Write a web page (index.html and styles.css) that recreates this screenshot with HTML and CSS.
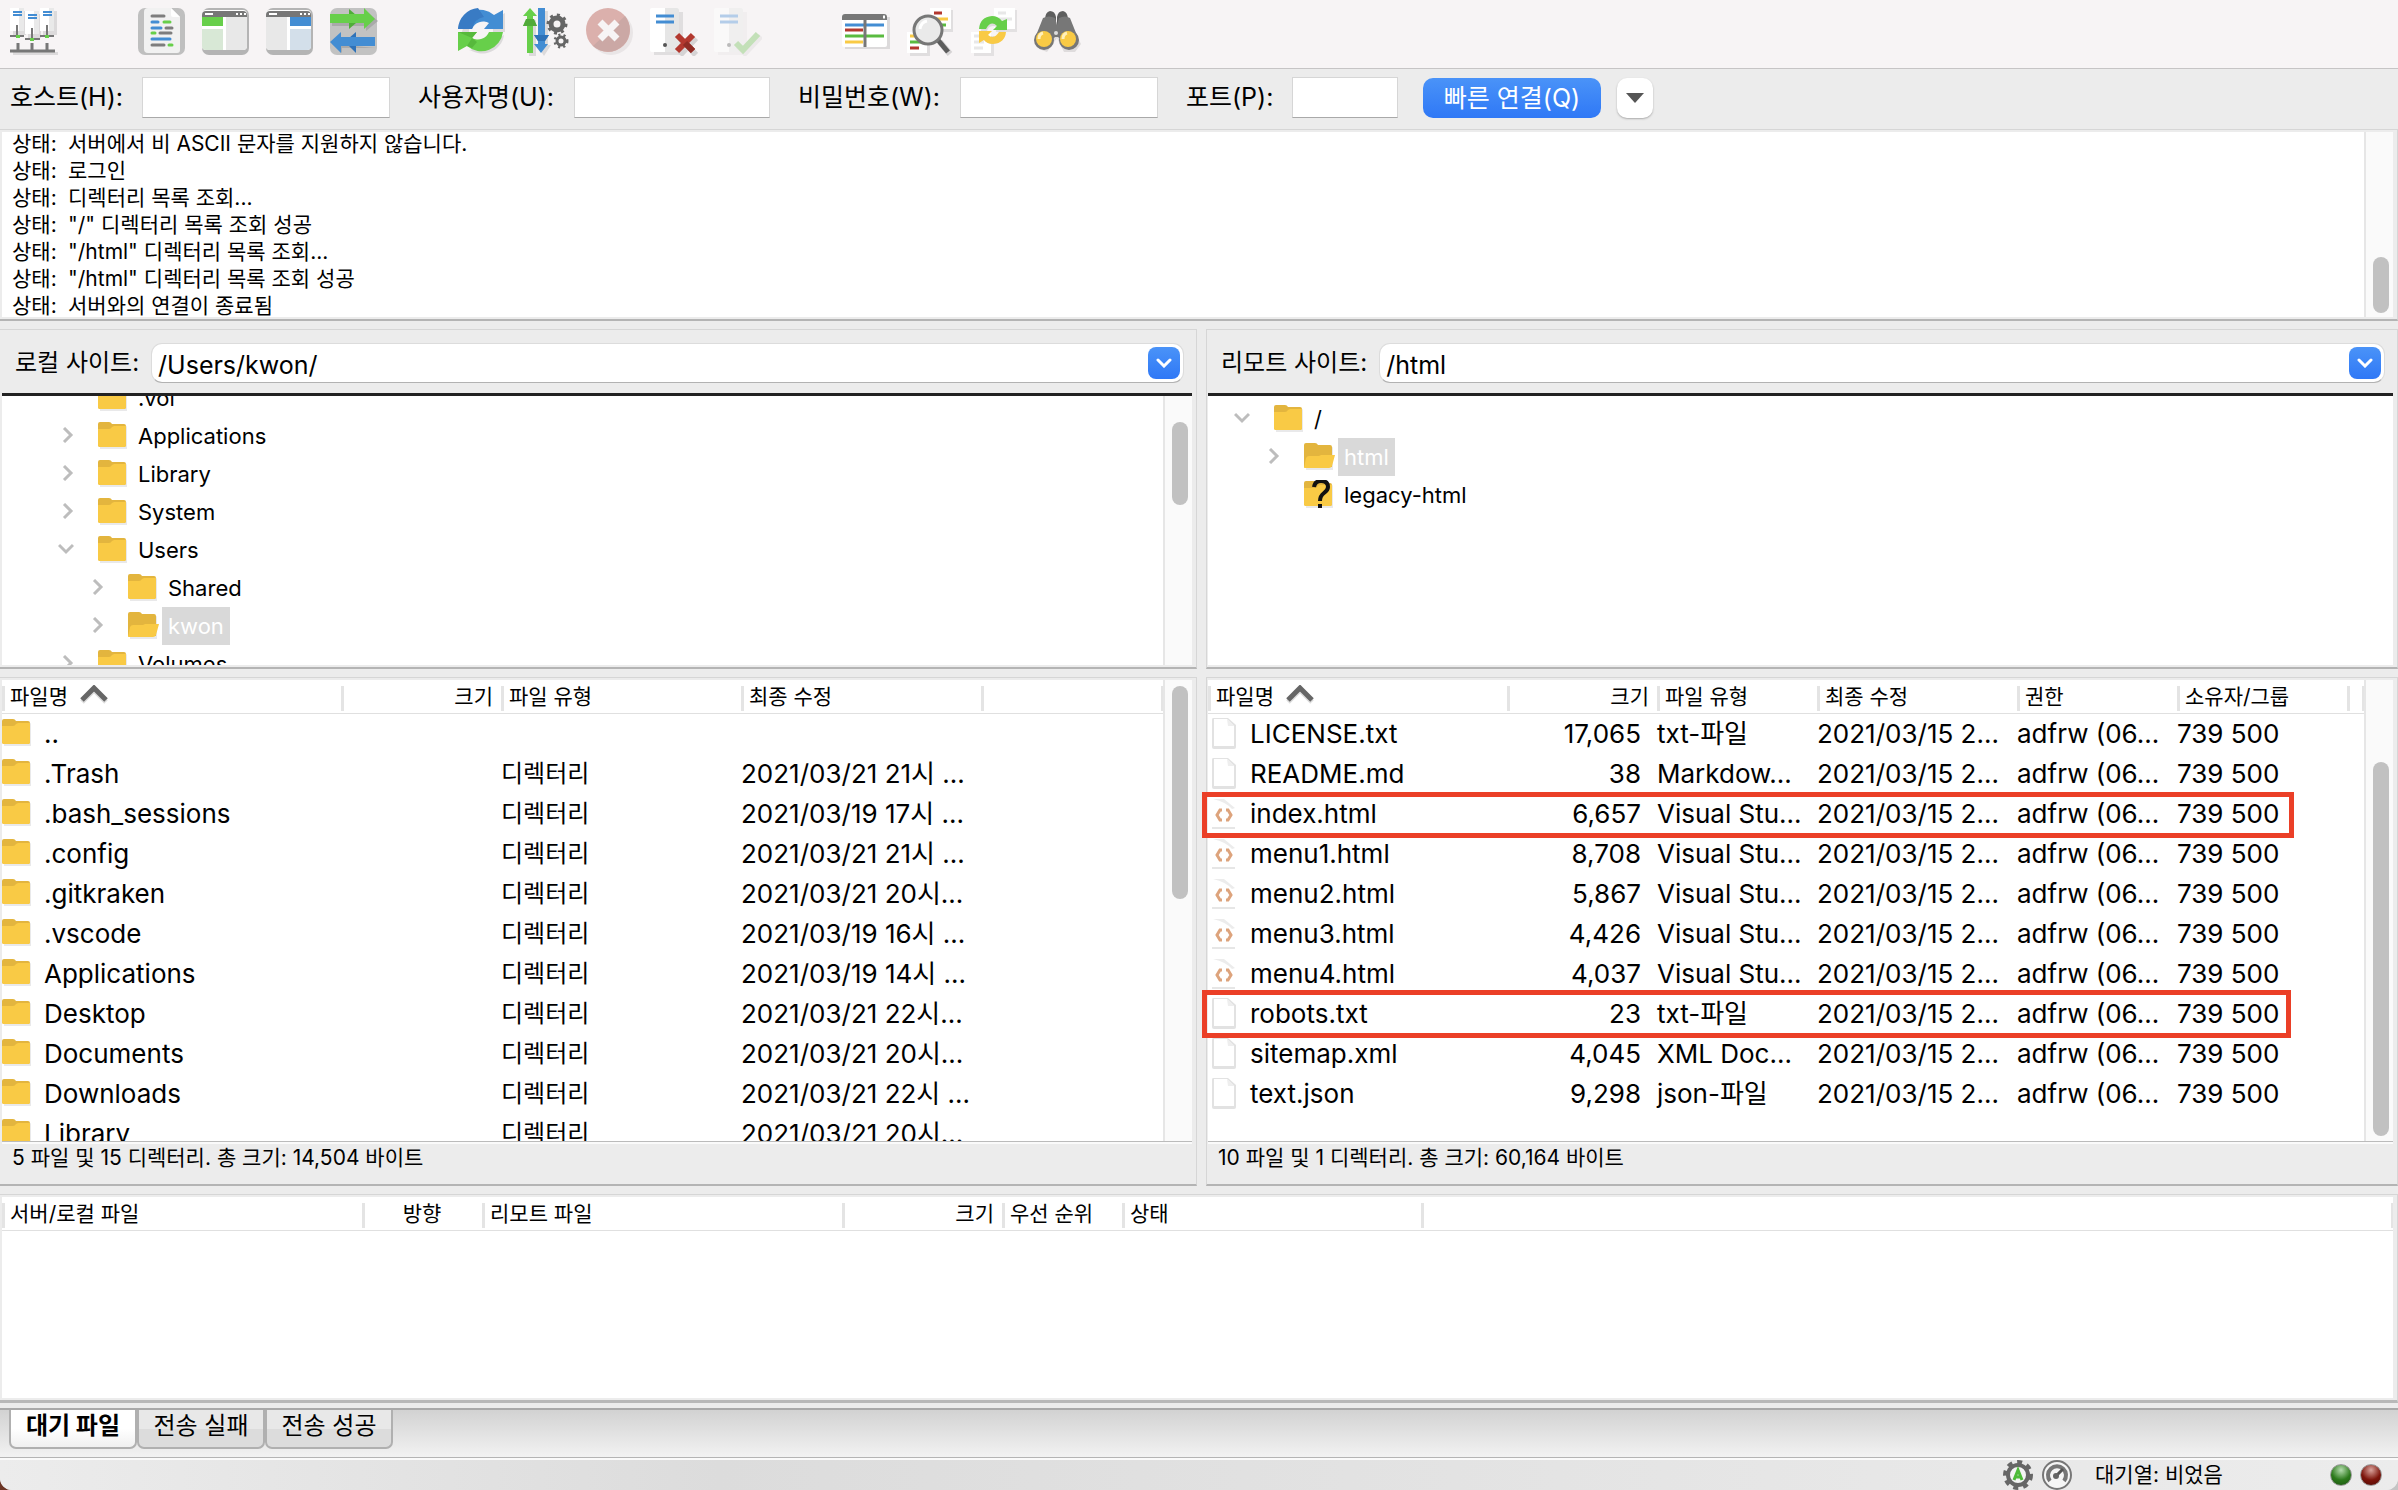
FILE: index.html
```html
<!DOCTYPE html>
<html lang="ko">
<head>
    <meta charset="UTF-8">
    <meta name="viewport" content="width=device-width, initial-scale=1.0">
    <title>FileZilla</title>
    <link rel="stylesheet" href="styles.css">
</head>
<body>
    <!-- shared icons -->
    <svg class="defs" width="0" height="0" aria-hidden="true">
        <symbol id="folder" viewBox="0 0 32 32">
            <path d="M2 5h26q1 0 1 1v22H2z" fill="#e9e9ea"/>
            <path d="M0 3q0-2 2-2h9q2 0 3 2h12q2 0 2 2v19q0 2-2 2H2q-2 0-2-2z" fill="#e3b53e"/>
            <path d="M0 8h11q2 0 3-2l2-1h12v19q0 2-2 2H2q-2 0-2-2z" fill="#f9ca45"/>
        </symbol>
        <symbol id="folder-open" viewBox="0 0 32 32">
            <path d="M2 5h26q1 0 1 1v22H2z" fill="#e9e9ea"/>
            <path d="M0 3q0-2 2-2h9q2 0 3 2h12q2 0 2 2v20H0z" fill="#e3b53e"/>
            <path d="M0 26l2-10q1-2 3-2h10l2-1h14l-3 11q-1 2-3 2z" fill="#f9ca45"/>
        </symbol>
        <symbol id="right" viewBox="0 0 16 16">
            <path d="M6 1l7 7-7 7" fill="none" stroke="#bdbdbd" stroke-width="3"/>
        </symbol>
        <symbol id="down" viewBox="0 0 16 16">
            <path d="M1 4l7 7 7-7" fill="none" stroke="#bdbdbd" stroke-width="3"/>
        </symbol>
        <symbol id="file" viewBox="0 0 32 32">
            <path d="M5 0h15l8 7v22q0 2-2 2H6q-2 0-2-2V2q0-2 1-2z" fill="#e2e2e2"/>
            <path d="M6 1h13l7 7v20H6z" fill="#fff"/>
            <path d="M19 1l7 7h-6z" fill="#eee"/>
        </symbol>
        <symbol id="code" viewBox="0 0 32 32">
            <path d="M5 1h11l11 9-3 1q-6-7-19-10z" fill="#ececec"/>
            <path d="M4 29h23v2H4z" fill="#e6e6e6"/>
            <path d="M14 12h-2l-3 5 3 5h2M18 12h2l3 5-3 5h-2" fill="none" stroke="#dda37c" stroke-width="3"/>
        </symbol>
        <symbol id="sort" viewBox="0 0 28 20">
            <path d="M2 17L14 5l12 12" fill="none" stroke="#ddd" stroke-width="5"/>
            <path d="M2 15L14 3l12 12" fill="none" stroke="#666" stroke-width="5"/>
        </symbol>
    </svg>

    <div class="window">
        <div class="toolbar">
            <button type="button" aria-label="사이트 관리자">
                <svg viewBox="0 0 48 48">
                    <path d="M3 3h13v24H3zM18 6h13v24H18zM33 3h14v24H33zM3 44h45v3H3z" fill="#dcdadb"/>
                    <path d="M0 0h14v23H0zM15 3h14v23H15zM30 0h14v23H30z" fill="#fff"/>
                    <path d="M9 0h5v23H9zM24 3h5v23h-5zM39 0h5v23h-5z" fill="#e9e9e9"/>
                    <path d="M3 4h9M3 7h9M18 7h9M18 10h9M33 4h9M33 7h9" stroke="#438dd3" stroke-width="2"/>
                    <path d="M7 17v11M22 20v11M37 17v11M0 28h14M15 31h15M30 28h14" stroke="#777" stroke-width="2"/>
                    <path d="M8 35v9M22 35v9M37 35v9M0 43h45" stroke="#777" stroke-width="3"/>
                    <path d="M6 27h4v3H6zM20 30h4v3h-4zM35 27h4v3h-4z" fill="#67cf4a"/>
                </svg>
            </button>
            <button type="button" class="group" aria-label="메시지 로그">
                <svg viewBox="0 0 48 48">
                    <rect width="47" height="47" rx="7" fill="#bfbfbf"/>
                    <path d="M10 0h23l9 9v33q0 3-3 3H10q-4 0-4-4V4q0-4 4-4z" fill="#f1f1f1"/>
                    <path d="M33 0l9 9h-7q-2 0-2-2z" fill="#fff"/>
                    <g stroke-width="3" stroke-linecap="round">
                        <path d="M14 8h12M28 20h6M22 25h11M14 37h12" stroke="#7d7d7d"/>
                        <path d="M14 14h6M14 20h9M14 31h18" stroke="#438dd3"/>
                        <path d="M26 14h6M14 25h3M31 37h3" stroke="#67cf4a"/>
                    </g>
                </svg>
            </button>
            <button type="button" aria-label="로컬 디렉터리 트리">
                <svg viewBox="0 0 48 48">
                    <rect width="47" height="47" rx="7" fill="#b4b4b4"/>
                    <rect y="2" width="45" height="40" rx="4" fill="#fff"/>
                    <path d="M0 9V7q0-4 4-4h37q4 0 4 4v2z" fill="#777"/>
                    <path d="M0 9h21v9H0z" fill="#67cf4a"/>
                    <path d="M0 21h21v21H4q-4 0-4-4z" fill="#d8e8d6"/>
                    <path d="M24 9h21v29q0 4-4 4H24z" fill="#e8e8e8"/>
                    <path d="M3 6h8M34 6h2M38 6h2M42 6h2" stroke="#fff" stroke-width="2"/>
                </svg>
            </button>
            <button type="button" aria-label="리모트 디렉터리 트리">
                <svg viewBox="0 0 48 48">
                    <rect width="47" height="47" rx="7" fill="#b4b4b4"/>
                    <rect y="2" width="45" height="40" rx="4" fill="#fff"/>
                    <path d="M0 9V7q0-4 4-4h37q4 0 4 4v2z" fill="#777"/>
                    <path d="M24 9h21v9H24z" fill="#438dd3"/>
                    <path d="M24 21h21v17q0 4-4 4H24z" fill="#d3dfea"/>
                    <path d="M0 9h21v33H4q-4 0-4-4z" fill="#e8e8e8"/>
                    <path d="M3 6h8M34 6h2M38 6h2M42 6h2" stroke="#fff" stroke-width="2"/>
                </svg>
            </button>
            <button type="button" aria-label="전송 대기열">
                <svg viewBox="0 0 48 48">
                    <rect width="47" height="47" rx="7" fill="#c2c2c2"/>
                    <path d="M2 8h34V3l12 10-12 10v-5H2zM46 40H12v5L2 36" fill="#a9a9a9"/>
                    <path d="M19 1l7 6v8l-7 6z" fill="#4fae38"/>
                    <path d="M0 6h34V0l11 11-11 10v-6H0z" fill="#67cf4a"/>
                    <path d="M26 24l-7 6v8l7 7z" fill="#2f72b8"/>
                    <path d="M45 29H11v-5L0 34l11 11v-7h34z" fill="#438dd3"/>
                </svg>
            </button>
            <button type="button" class="group" aria-label="새로 고침">
                <svg viewBox="0 0 48 48">
                    <path d="M4 24A22 21 0 0 1 38 10l9-5v19H30zM46 27A22 21 0 0 1 12 42l-9 4" fill="#dcdadb"/>
                    <circle cx="23" cy="23" r="12" fill="#f7f4f5"/>
                    <path d="M0 21A22 22 0 0 1 36 7l9-5v19H26l5-6a12 12 0 0 0-17 6z" fill="#438dd3"/>
                    <path d="M0 21A22 22 0 0 1 20 0l6 9q-9 1-12 12z" fill="#397bc4"/>
                    <path d="M45 24A22 22 0 0 1 9 38l-9 5V24h19l-5 6a12 12 0 0 0 17-6z" fill="#67cf4a"/>
                    <path d="M19 24l-5 6 5 4-5 6-5-2 5-8-14-6z" fill="#57b93c"/>
                </svg>
            </button>
            <button type="button" aria-label="대기열 처리">
                <svg viewBox="0 0 48 48">
                    <path d="M7 12h7v36H7zM19 3h7v34h3l-7 11-7-11h4z" fill="#dcdadb"/>
                    <path d="M8 0l7 8h-4v3l4 7h-4v27H5V18H1l4-7V8H1z" fill="#67cf4a"/>
                    <path d="M4 11h8l3 7H1z" fill="#51aa39"/>
                    <path d="M16 0h7v27h4l-4 6v3h3l-7 9-7-9h4v-3l-4-6h4z" fill="#438dd3"/>
                    <path d="M12 27h15l-4 6h-7z" fill="#2f72b8"/>
                    <g fill="none" stroke="#666">
                        <circle cx="35" cy="16" r="6" stroke-width="5"/>
                        <circle cx="35" cy="16" r="9" stroke-width="3" stroke-dasharray="3 4"/>
                        <circle cx="39" cy="33" r="4" stroke-width="3"/>
                        <circle cx="39" cy="33" r="6" stroke-width="3" stroke-dasharray="2 3"/>
                    </g>
                </svg>
            </button>
            <button type="button" aria-label="취소" disabled>
                <svg viewBox="0 0 48 48">
                    <circle cx="25" cy="25" r="22" fill="#e9e5e6"/>
                    <circle cx="22" cy="22" r="22" fill="#dbb0ac"/>
                    <path d="M39 8A22 22 0 0 1 7 38z" fill="#cba8a5"/>
                    <path d="M14 14l17 17M31 14L14 31" stroke="#f7f4f5" stroke-width="7"/>
                </svg>
            </button>
            <button type="button" aria-label="연결 끊기">
                <svg viewBox="0 0 48 48">
                    <path d="M4 4h29v43H4z" fill="#e0dedf"/>
                    <rect width="29" height="44" rx="2" fill="#fff"/>
                    <path d="M15 0h12q2 0 2 2v40q0 2-2 2H15z" fill="#e6e6e6"/>
                    <path d="M6 8h18M6 14h18" stroke="#438dd3" stroke-width="3"/>
                    <circle cx="15" cy="37" r="2" fill="#555"/>
                    <path d="M30 30l16 17M46 30L30 47" stroke="#d5d3d4" stroke-width="6"/>
                    <path d="M27 27l16 16M43 27L27 43" stroke="#b3382f" stroke-width="6"/>
                    <path d="M35 35l8 8" stroke="#8f2c25" stroke-width="6"/>
                </svg>
            </button>
            <button type="button" aria-label="다시 연결" disabled>
                <svg viewBox="0 0 48 48">
                    <path d="M4 4h29v43H4z" fill="#f1eeef"/>
                    <rect width="29" height="44" rx="2" fill="#faf9f9"/>
                    <path d="M15 0h12q2 0 2 2v40q0 2-2 2H15z" fill="#f0efef"/>
                    <path d="M6 8h18M6 14h18" stroke="#b4cde9" stroke-width="3"/>
                    <circle cx="15" cy="37" r="2" fill="#bbb"/>
                    <path d="M24 38l7 7 16-17" fill="none" stroke="#ece9ea" stroke-width="6"/>
                    <path d="M22 35l7 7 15-16" fill="none" stroke="#c3e0b8" stroke-width="6"/>
                </svg>
            </button>
            <button type="button" class="group" aria-label="필터">
                <svg viewBox="0 0 48 48">
                    <path d="M3 9h45v32H3z" fill="#dcdadb"/>
                    <rect y="6" width="45" height="33" rx="2" fill="#fff"/>
                    <path d="M0 12V9q0-3 3-3h39q3 0 3 3v3z" fill="#777"/>
                    <path d="M41 9h2" stroke="#fff" stroke-width="3"/>
                    <path d="M3 17h39" stroke="#438dd3" stroke-width="3"/>
                    <path d="M3 22h18" stroke="#b3382f" stroke-width="3"/>
                    <path d="M3 28h39" stroke="#5abb40" stroke-width="3"/>
                    <path d="M3 34h18" stroke="#f9ca45" stroke-width="3"/>
                    <path d="M23 12v27" stroke="#777" stroke-width="3"/>
                </svg>
            </button>
            <button type="button" aria-label="디렉터리 비교">
                <svg viewBox="0 0 48 48">
                    <path d="M26 2h21v22H26zM4 28h20v20H4z" fill="#e0dedf"/>
                    <path d="M24 0h21v21H24zM1 24h20v21H1z" fill="#fff"/>
                    <path d="M28 5h8M4 40h9" stroke="#b3382f" stroke-width="3"/>
                    <path d="M28 11h14M4 28h8" stroke="#f9ca45" stroke-width="3"/>
                    <path d="M34 17h6M4 34h14" stroke="#5abb40" stroke-width="3"/>
                    <path d="M34 34l10 12" stroke="#d5d3d4" stroke-width="6"/>
                    <path d="M32 32l10 12" stroke="#5c5c5c" stroke-width="5"/>
                    <circle cx="22" cy="22" r="14" fill="#eaeaea" stroke="#777" stroke-width="3"/>
                    <path d="M14 21q1-7 7-8" fill="none" stroke="#fff" stroke-width="3"/>
                </svg>
            </button>
            <button type="button" aria-label="동기화 탐색">
                <svg viewBox="0 0 48 48">
                    <path d="M26 2h21v22H26zM4 28h20v20H4z" fill="#e3e1e2"/>
                    <path d="M24 0h21v21H24zM1 24h20v21H1z" fill="#fff"/>
                    <path d="M28 5h8M28 11h14M4 28h6M4 34h10M4 40h9" stroke="#e8e8e8" stroke-width="3"/>
                    <circle cx="23" cy="24" r="9" fill="none" stroke="#dedcdd" stroke-width="6"/>
                    <path d="M9 21q1-12 13-13 6 0 10 5l5-2v11H23l4-4q-6-6-11 3z" fill="#67cf4a"/>
                    <path d="M36 24q-1 11-13 12-6 0-9-4l-5 3V23h13l-4 4q6 5 11-3z" fill="#f9ca45"/>
                </svg>
            </button>
            <button type="button" aria-label="찾기">
                <svg viewBox="0 0 48 48">
                    <path d="M16 8l7 6 10-6 14 28-6 8H30l-7-14-10 14-8-3z" fill="#dfdcdd"/>
                    <path d="M11 12q0-8 5-9 5 0 6 6v8H11zM23 17V9q1-6 6-6 5 1 5 9v5z" fill="#5e5e5e"/>
                    <path d="M9 10q6-3 12 0l2 7 2-7q6-3 11 0l8 20-10 8-10-9h-3l-9 9-11-8z" fill="#777"/>
                    <ellipse cx="10" cy="32" rx="10" ry="10" fill="#777"/>
                    <ellipse cx="35" cy="32" rx="10" ry="10" fill="#777"/>
                    <circle cx="10" cy="31" r="8" fill="#f9ca45"/>
                    <circle cx="34" cy="31" r="8" fill="#f9ca45"/>
                    <path d="M5 31q0-5 4-6M29 31q0-5 4-6" fill="none" stroke="#fff0bb" stroke-width="3"/>
                    <circle cx="22" cy="25" r="2" fill="#ddd"/>
                </svg>
            </button>
        </div>

        <form class="quickconnect">
            <label for="host">호스트(H):</label>
            <input type="text" id="host" name="host">
            <label for="user">사용자명(U):</label>
            <input type="text" id="user" name="user">
            <label for="pass">비밀번호(W):</label>
            <input type="password" id="pass" name="pass">
            <label for="port">포트(P):</label>
            <input type="text" id="port" name="port">
            <button type="button" class="connect">빠른 연결(Q)</button>
            <button type="button" class="history" aria-label="최근 연결">
                <svg width="18" height="10" viewBox="0 0 18 10"><path d="M0 0h18L9 10z" fill="#555"/></svg>
            </button>
        </form>

        <div class="pane log">
            <div class="log-lines">
                <p><span>상태:</span>서버에서 비 ASCII 문자를 지원하지 않습니다.</p>
                <p><span>상태:</span>로그인</p>
                <p><span>상태:</span>디렉터리 목록 조회...</p>
                <p><span>상태:</span>"/" 디렉터리 목록 조회 성공</p>
                <p><span>상태:</span>"/html" 디렉터리 목록 조회...</p>
                <p><span>상태:</span>"/html" 디렉터리 목록 조회 성공</p>
                <p><span>상태:</span>서버와의 연결이 종료됨</p>
            </div>
            <div class="scroll"><div class="thumb log-thumb"></div></div>
        </div>

        <div class="sites">
            <div class="site">
                <div class="pane tree-pane">
                    <div class="site-bar">
                        <label for="local">로컬 사이트:</label>
                        <div class="combo">
                            <select id="local"><option>/Users/kwon/</option></select>
                            <span class="arrow"><svg width="16" height="10" viewBox="0 0 16 10"><path d="M2 2l6 6 6-6" fill="none" stroke="#fff" stroke-width="3" stroke-linecap="round"/></svg></span>
                        </div>
                    </div>
                    <div class="view tree-view">
                        <ul class="tree local-tree">
                            <li><i></i><svg class="icon"><use href="#folder"/></svg><span>.vol</span></li>
                            <li><svg class="twist"><use href="#right"/></svg><svg class="icon"><use href="#folder"/></svg><span>Applications</span></li>
                            <li><svg class="twist"><use href="#right"/></svg><svg class="icon"><use href="#folder"/></svg><span>Library</span></li>
                            <li><svg class="twist"><use href="#right"/></svg><svg class="icon"><use href="#folder"/></svg><span>System</span></li>
                            <li><svg class="twist"><use href="#down"/></svg><svg class="icon"><use href="#folder"/></svg><span>Users</span></li>
                            <li class="child"><svg class="twist"><use href="#right"/></svg><svg class="icon"><use href="#folder"/></svg><span>Shared</span></li>
                            <li class="child"><svg class="twist"><use href="#right"/></svg><svg class="icon"><use href="#folder-open"/></svg><span class="selected">kwon</span></li>
                            <li><svg class="twist"><use href="#right"/></svg><svg class="icon"><use href="#folder"/></svg><span>Volumes</span></li>
                        </ul>
                        <div class="scroll"><div class="thumb tree-thumb"></div></div>
                    </div>
                </div>
                <div class="pane list-pane">
                    <div class="view">
                        <div class="list">
                            <table class="files">
                                <colgroup><col class="w340"><col class="w160"><col class="w240"><col class="w240"><col></colgroup>
                                <thead>
                                    <tr><th>파일명<svg class="sort"><use href="#sort"/></svg></th><th class="num">크기</th><th>파일 유형</th><th>최종 수정</th><th></th></tr>
                                </thead>
                                <tbody>
                                    <tr><td><svg class="icon"><use href="#folder"/></svg>..</td><td></td><td></td><td></td><td></td></tr>
                                    <tr><td><svg class="icon"><use href="#folder"/></svg>.Trash</td><td></td><td class="ko">디렉터리</td><td>2021/03/21 21시 ...</td><td></td></tr>
                                    <tr><td><svg class="icon"><use href="#folder"/></svg>.bash_sessions</td><td></td><td class="ko">디렉터리</td><td>2021/03/19 17시 ...</td><td></td></tr>
                                    <tr><td><svg class="icon"><use href="#folder"/></svg>.config</td><td></td><td class="ko">디렉터리</td><td>2021/03/21 21시 ...</td><td></td></tr>
                                    <tr><td><svg class="icon"><use href="#folder"/></svg>.gitkraken</td><td></td><td class="ko">디렉터리</td><td>2021/03/21 20시...</td><td></td></tr>
                                    <tr><td><svg class="icon"><use href="#folder"/></svg>.vscode</td><td></td><td class="ko">디렉터리</td><td>2021/03/19 16시 ...</td><td></td></tr>
                                    <tr><td><svg class="icon"><use href="#folder"/></svg>Applications</td><td></td><td class="ko">디렉터리</td><td>2021/03/19 14시 ...</td><td></td></tr>
                                    <tr><td><svg class="icon"><use href="#folder"/></svg>Desktop</td><td></td><td class="ko">디렉터리</td><td>2021/03/21 22시...</td><td></td></tr>
                                    <tr><td><svg class="icon"><use href="#folder"/></svg>Documents</td><td></td><td class="ko">디렉터리</td><td>2021/03/21 20시...</td><td></td></tr>
                                    <tr><td><svg class="icon"><use href="#folder"/></svg>Downloads</td><td></td><td class="ko">디렉터리</td><td>2021/03/21 22시 ...</td><td></td></tr>
                                    <tr><td><svg class="icon"><use href="#folder"/></svg>Library</td><td></td><td class="ko">디렉터리</td><td>2021/03/21 20시...</td><td></td></tr>
                                </tbody>
                            </table>
                        </div>
                        <div class="scroll"><div class="thumb list-thumb"></div></div>
                    </div>
                    <div class="summary">5 파일 및 15 디렉터리. 총 크기: 14,504 바이트</div>
                </div>
            </div>

            <div class="site remote">
                <div class="pane tree-pane">
                    <div class="site-bar">
                        <label for="remote">리모트 사이트:</label>
                        <div class="combo">
                            <select id="remote"><option>/html</option></select>
                            <span class="arrow"><svg width="16" height="10" viewBox="0 0 16 10"><path d="M2 2l6 6 6-6" fill="none" stroke="#fff" stroke-width="3" stroke-linecap="round"/></svg></span>
                        </div>
                    </div>
                    <div class="view tree-view">
                        <ul class="tree remote-tree">
                            <li><svg class="twist"><use href="#down"/></svg><svg class="icon"><use href="#folder"/></svg><span>/</span></li>
                            <li class="child"><svg class="twist"><use href="#right"/></svg><svg class="icon"><use href="#folder-open"/></svg><span class="selected">html</span></li>
                            <li class="child"><i></i><svg class="icon" viewBox="0 0 32 32"><use href="#folder" width="32" height="32"/><path d="M10 7q1-6 7-6 7 0 7 6 0 3-4 6-4 3-4 8" fill="none" stroke="#111" stroke-width="4"/><path d="M14 24h4v4h-4z" fill="#111"/></svg><span>legacy-html</span></li>
                        </ul>
                    </div>
                </div>
                <div class="pane list-pane">
                    <div class="view">
                        <div class="list">
                            <table class="files">
                                <colgroup><col class="w300"><col class="w150"><col class="w160"><col class="w200"><col class="w160"><col class="w170"><col></colgroup>
                                <thead>
                                    <tr><th>파일명<svg class="sort"><use href="#sort"/></svg></th><th class="num">크기</th><th>파일 유형</th><th>최종 수정</th><th>권한</th><th>소유자/그룹</th><th></th></tr>
                                </thead>
                                <tbody>
                                    <tr><td><svg class="icon"><use href="#file"/></svg>LICENSE.txt</td><td class="num">17,065</td><td>txt-파일</td><td>2021/03/15 2...</td><td>adfrw (06...</td><td>739 500</td><td></td></tr>
                                    <tr><td><svg class="icon"><use href="#file"/></svg>README.md</td><td class="num">38</td><td>Markdow...</td><td>2021/03/15 2...</td><td>adfrw (06...</td><td>739 500</td><td></td></tr>
                                    <tr><td><svg class="icon"><use href="#code"/></svg>index.html</td><td class="num">6,657</td><td>Visual Stu...</td><td>2021/03/15 2...</td><td>adfrw (06...</td><td>739 500</td><td></td></tr>
                                    <tr><td><svg class="icon"><use href="#code"/></svg>menu1.html</td><td class="num">8,708</td><td>Visual Stu...</td><td>2021/03/15 2...</td><td>adfrw (06...</td><td>739 500</td><td></td></tr>
                                    <tr><td><svg class="icon"><use href="#code"/></svg>menu2.html</td><td class="num">5,867</td><td>Visual Stu...</td><td>2021/03/15 2...</td><td>adfrw (06...</td><td>739 500</td><td></td></tr>
                                    <tr><td><svg class="icon"><use href="#code"/></svg>menu3.html</td><td class="num">4,426</td><td>Visual Stu...</td><td>2021/03/15 2...</td><td>adfrw (06...</td><td>739 500</td><td></td></tr>
                                    <tr><td><svg class="icon"><use href="#code"/></svg>menu4.html</td><td class="num">4,037</td><td>Visual Stu...</td><td>2021/03/15 2...</td><td>adfrw (06...</td><td>739 500</td><td></td></tr>
                                    <tr><td><svg class="icon"><use href="#file"/></svg>robots.txt</td><td class="num">23</td><td>txt-파일</td><td>2021/03/15 2...</td><td>adfrw (06...</td><td>739 500</td><td></td></tr>
                                    <tr><td><svg class="icon"><use href="#file"/></svg>sitemap.xml</td><td class="num">4,045</td><td>XML Doc...</td><td>2021/03/15 2...</td><td>adfrw (06...</td><td>739 500</td><td></td></tr>
                                    <tr><td><svg class="icon"><use href="#file"/></svg>text.json</td><td class="num">9,298</td><td>json-파일</td><td>2021/03/15 2...</td><td>adfrw (06...</td><td>739 500</td><td></td></tr>
                                </tbody>
                            </table>
                        </div>
                        <div class="scroll"><div class="thumb remote-thumb"></div></div>
                    </div>
                    <div class="summary">10 파일 및 1 디렉터리. 총 크기: 60,164 바이트</div>
                    <div class="mark mark-index"></div>
                    <div class="mark mark-robots"></div>
                </div>
            </div>
        </div>

        <div class="pane queue">
            <div class="list">
                <table class="files">
                    <colgroup><col class="w360"><col class="w120"><col class="w360"><col class="w160"><col class="w120"><col class="w300"><col></colgroup>
                    <thead>
                        <tr><th>서버/로컬 파일</th><th class="mid">방향</th><th>리모트 파일</th><th class="num">크기</th><th>우선 순위</th><th>상태</th><th></th></tr>
                    </thead>
                </table>
            </div>
        </div>

        <div class="tabs">
            <button type="button" class="active">대기 파일</button>
            <button type="button">전송 실패</button>
            <button type="button">전송 성공</button>
        </div>

        <div class="status">
            <svg width="32" height="32" viewBox="0 0 32 32">
                <circle cx="15" cy="16" r="10" fill="#f4f4f4" stroke="#666" stroke-width="4"/>
                <circle cx="15" cy="16" r="13" fill="none" stroke="#666" stroke-width="4" stroke-dasharray="5 5"/>
                <path d="M11 21l4-10 4 10M12 18h6" fill="none" stroke="#4dbb38" stroke-width="3"/>
            </svg>
            <svg width="32" height="32" viewBox="0 0 32 32">
                <circle cx="16" cy="16" r="14" fill="#f6f6f6" stroke="#777" stroke-width="2"/>
                <path d="M9 22a9 9 0 1 1 14 0" fill="none" stroke="#777" stroke-width="4"/>
                <path d="M15 17l7-7" stroke="#555" stroke-width="3"/>
                <circle cx="15" cy="17" r="3" fill="#666"/>
            </svg>
            <span class="queue-text">대기열: 비었음</span>
            <span class="led green"></span>
            <span class="led red"></span>
        </div>
    </div>
</body>
</html>
```
FILE: styles.css
```css
*{
    box-sizing: border-box;
}
body{
    margin: 0;
    background: linear-gradient(to right, #6b3525 50%, #c4c4c4 50%);
    font-family: Inter, "Noto Sans CJK KR", sans-serif;
    font-size: 21px;
    color: #000;
}
button, input, select{
    font-family: inherit;
    color: inherit;
}
.defs{
    position: absolute;
}
.window{
    display: flex;
    flex-direction: column;
    height: 100vh;
    background: #ececec;
    border-radius: 0 0 12px 12px;
    overflow: hidden;
}

/* toolbar */
.toolbar{
    display: flex;
    gap: 16px;
    padding: 8px 10px 12px;
    background: #f7f4f5;
    border-bottom: 1px solid #c6c4c5;
}
.toolbar button{
    width: 48px;
    height: 48px;
    padding: 0;
    border: none;
    background: none;
}
.toolbar .group{
    margin-left: 64px;
}
.toolbar svg{
    display: block;
    width: 48px;
    height: 48px;
}

/* quick connect */
.quickconnect{
    display: grid;
    grid-template-columns: 132px 248px 184px 196px 190px 198px 134px 106px 178px 36px;
    align-items: center;
    padding: 8px 10px 11px;
    font-size: 25px;
}
.quickconnect label{
    line-height: 41px;
    white-space: nowrap;
}
.quickconnect label:not(:first-child){
    padding-left: 28px;
}
.quickconnect input{
    width: 100%;
    height: 41px;
    border: 1px solid #d6d6d6;
    border-bottom: 1px solid #a9a9a9;
    background: #fff;
    font-size: 25px;
}
.connect{
    height: 40px;
    margin-left: 25px;
    width: 178px;
    padding: 0;
    border: none;
    border-radius: 10px;
    background: linear-gradient(#4a93f8, #2f78f6);
    color: #fff;
    font-size: 25px;
    line-height: 36px;
}
.history{
    display: flex;
    align-items: center;
    justify-content: center;
    width: 36px;
    height: 40px;
    margin-left: 41px;
    padding: 0;
    border: none;
    border-radius: 10px;
    background: #fff;
    box-shadow: 0 1px 2px #aaa;
}

/* bordered panes and their scroll bars */
.pane{
    display: flex;
    min-height: 0;
    border-top: 1px solid #d6d6d6;
    border-right: 1px solid #d6d6d6;
    border-bottom: 2px solid #b4b4b4;
    padding: 2px 4px 2px 2px;
}
.scroll{
    flex: none;
    width: 29px;
    padding: 0 4px 0 7px;
    border-left: 2px solid #e6e6e6;
    background: #fafafa;
}
.thumb{
    border-radius: 8px;
    background: #c1c1c1;
}

.log{
    flex: 185 1 0;
    background: #ececec;
    margin-bottom: 8px;
}
.log-lines{
    flex: 1;
    display: flex;
    flex-direction: column;
    justify-content: center;
    background: #fff;
    padding-left: 10px;
    overflow: hidden;
}
.log-lines p{
    flex: none;
    margin: 0;
    line-height: 27px;
    white-space: nowrap;
}
.log-lines span{
    display: inline-block;
    width: 56px;
}
.log-thumb{
    height: 56px;
    margin-top: 125px;
}

/* local and remote sites */
.sites{
    flex: 857 1 0;
    min-height: 0;
    display: grid;
    grid-template-columns: minmax(0, 1197fr) minmax(0, 1192fr);
    grid-template-rows: minmax(0, 1fr);
    column-gap: 9px;
}
.site{
    display: flex;
    flex-direction: column;
    gap: 8px;
    min-height: 0;
}
.remote .pane{
    border-left: 1px solid #d6d6d6;
    padding-left: 1px;
}
.tree-pane, .list-pane{
    flex-direction: column;
}
.tree-pane{
    flex: 335 1 0;
    padding-top: 0;
}
.list-pane{
    position: relative;
    flex: 504 1 0;
    padding-bottom: 0;
}
.site-bar{
    flex: none;
    display: flex;
    align-items: center;
    gap: 12px;
    padding: 13px 8px 10px 13px;
    font-size: 24px;
}
.site-bar label{
    line-height: 36px;
    white-space: nowrap;
}
.combo{
    position: relative;
    flex: 1;
}
.combo select{
    display: block;
    width: 100%;
    height: 40px;
    appearance: none;
    padding: 4px 44px 0 6px;
    border: 1px solid #dcdcdc;
    border-bottom-color: #b2b2b2;
    border-radius: 11px;
    background: #fff;
    font-size: 25px;
}
.arrow{
    position: absolute;
    top: 4px;
    right: 4px;
    display: flex;
    align-items: center;
    justify-content: center;
    width: 32px;
    height: 32px;
    border-radius: 8px;
    background: linear-gradient(#4a93f8, #2f78f6);
    pointer-events: none;
}
.view{
    flex: 1;
    display: flex;
    min-height: 0;
    background: #fff;
}
.tree-view{
    border-top: 3px solid #222;
}
.tree{
    flex: 1;
    display: flex;
    flex-direction: column;
    margin: 0;
    padding: 0;
    list-style: none;
    overflow: hidden;
    font-size: 22px;
}
.local-tree{
    justify-content: center;
    padding-left: 56px;
}
.remote-tree{
    padding: 4px 0 0 26px;
}
.tree li{
    flex: none;
    display: flex;
    height: 38px;
}
.tree .child{
    padding-left: 30px;
}
.tree i, .twist{
    width: 16px;
    height: 16px;
    margin: 10px 24px 0 0;
}
.icon{
    flex: none;
    width: 32px;
    height: 32px;
}
.tree .icon{
    margin-top: 4px;
    margin-right: 2px;
}
.tree span{
    padding: 0 6px;
    line-height: 38px;
}
.tree .selected{
    background: #d9d9d9;
    color: #fff;
}
.tree-thumb{
    height: 83px;
    margin-top: 26px;
}

/* file lists */
.list{
    flex: 1;
    min-width: 0;
    background: #fff;
    overflow: hidden;
}
.files{
    width: 100%;
    table-layout: fixed;
    border-collapse: separate;
    border-spacing: 0;
    font-size: 26px;
}
.w120{ width: 120px; }
.w150{ width: 150px; }
.w160{ width: 160px; }
.w170{ width: 170px; }
.w200{ width: 200px; }
.w240{ width: 240px; }
.w300{ width: 299px; }
.w340{ width: 339px; }
.w360{ width: 360px; }
.files th{
    height: 34px;
    padding: 0 8px;
    border-bottom: 1px solid #e0e0e0;
    background: linear-gradient(#e4e4e4, #e4e4e4) no-repeat left 6px / 3px 25px;
    font-size: 21px;
    font-weight: normal;
    line-height: 32px;
    text-align: left;
    white-space: nowrap;
}
.files th:last-child{
    background: linear-gradient(#e4e4e4, #e4e4e4) no-repeat left 6px / 3px 25px, linear-gradient(#e4e4e4, #e4e4e4) no-repeat right 6px / 2px 25px;
}
.files td{
    height: 40px;
    padding: 0;
    line-height: 40px;
    white-space: nowrap;
}
.files .num{
    text-align: right;
}
.files td.num{
    padding-right: 16px;
}
.files .mid{
    text-align: center;
}
.files .ko{
    font-size: 24px;
}
.files .icon{
    margin-top: 4px;
    margin-right: 10px;
    vertical-align: top;
}
.sort{
    width: 28px;
    height: 20px;
    margin-top: 4px;
    margin-left: 12px;
    vertical-align: top;
}
.list-thumb{
    height: 213px;
    margin-top: 6px;
}
.remote-thumb{
    height: 374px;
    margin-top: 82px;
}
.summary{
    flex: none;
    height: 43px;
    padding-left: 10px;
    border-top: 1px solid #bbb;
    box-shadow: inset 0 2px #fafafa;
    line-height: 32px;
    white-space: nowrap;
}
/* red frames over the two uploaded files */
.mark{
    position: absolute;
    left: -5px;
    border: 5px solid #eb3f27;
}
.mark-index{
    top: 114px;
    right: 103px;
    height: 46px;
}
.mark-robots{
    top: 312px;
    right: 106px;
    height: 48px;
}

/* transfer queue */
.queue{
    flex: 201 1 0;
    margin-top: 8px;
    border-bottom: 3px solid #b8b8b8;
}
.tabs{
    display: flex;
    margin-top: 5px;
    padding: 0 9px 8px;
    border-top: 2px solid #a9a9a9;
    border-bottom: 1px solid #b4b4b4;
    background: linear-gradient(#d2d2d2, #f2f2f2);
}
.tabs button{
    width: 128px;
    height: 39px;
    padding: 0 0 6px;
    border: 2px solid #b0b0b0;
    border-top: none;
    border-radius: 0 0 7px 7px;
    background: linear-gradient(#e8e8e8 50%, #dcdcdc 50%);
    font-size: 24px;
    line-height: 31px;
    white-space: nowrap;
}
.tabs .active{
    background: linear-gradient(#fff 50%, #f0f0f0);
    font-weight: bold;
}

/* status bar */
.status{
    display: flex;
    align-items: center;
    justify-content: flex-end;
    height: 32px;
    padding-right: 16px;
    border-top: 2px solid #fafafa;
    background: linear-gradient(to right, #ececec, #dcdcdc 30%, #ececec);
}
.status svg{
    margin-right: 6px;
}
.queue-text{
    width: 235px;
    margin-left: 16px;
    line-height: 24px;
}
.led{
    width: 22px;
    height: 22px;
    margin-left: 8px;
    border: 1px solid #999;
    border-radius: 50%;
}
.green{
    margin-left: 0;
    background: radial-gradient(circle at 50% 25%, #b5dcae, #2c7a1b 55%, #1b5210);
}
.red{
    background: radial-gradient(circle at 50% 25%, #d9a39c, #7d150b 55%, #4f0a04);
}
```
